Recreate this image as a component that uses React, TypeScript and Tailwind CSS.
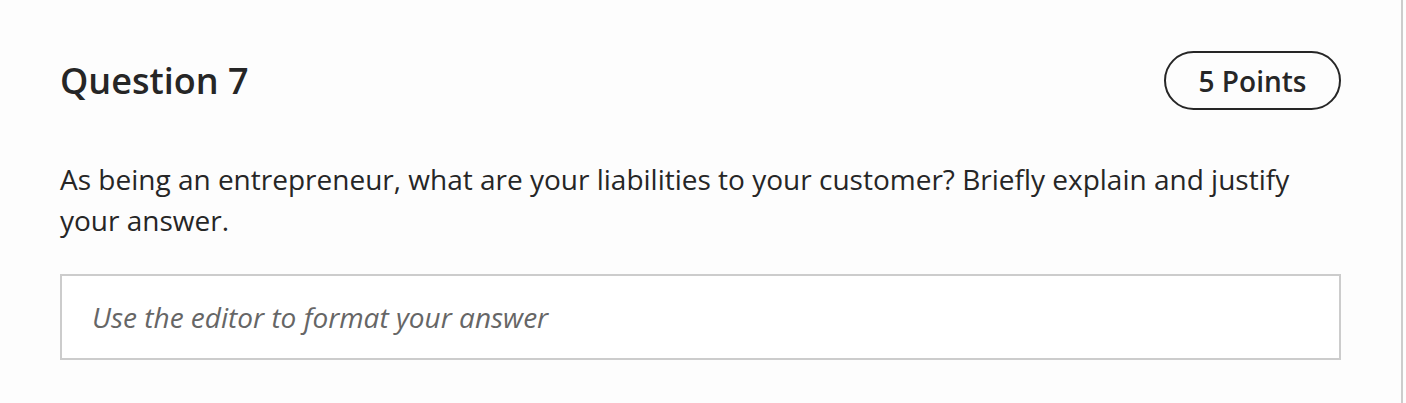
export default function App() {
  return (
    <div className="w-[1406px] h-[403px] bg-[#fdfdfd] flex font-['Open_Sans',sans-serif] text-[#262626]">
      <div className="flex-1 pl-[60px] pr-[60px] pt-[51px]">
        <div className="flex items-center justify-between">
          <h2 className="text-[36px] font-semibold leading-none">Question 7</h2>
          <span className="h-[59px] w-[177px] rounded-full border-2 border-[#262626] flex items-center justify-center text-[28px] font-semibold">
            5 Points
          </span>
        </div>
        <p className="mt-[49px] text-[28px] leading-[41px] pr-[40px]">
          As being an entrepreneur, what are your liabilities to your customer? Briefly explain and justify your answer.
        </p>
        <div className="mt-[33px] h-[86px] border-2 border-[#cccccc] bg-white flex items-center pl-[30px]">
          <span className="italic text-[28px] text-[#666666]">Use the editor to format your answer</span>
        </div>
      </div>
      <div className="w-[2px] bg-[#cccccc] mr-[3px]" />
    </div>
  );
}
